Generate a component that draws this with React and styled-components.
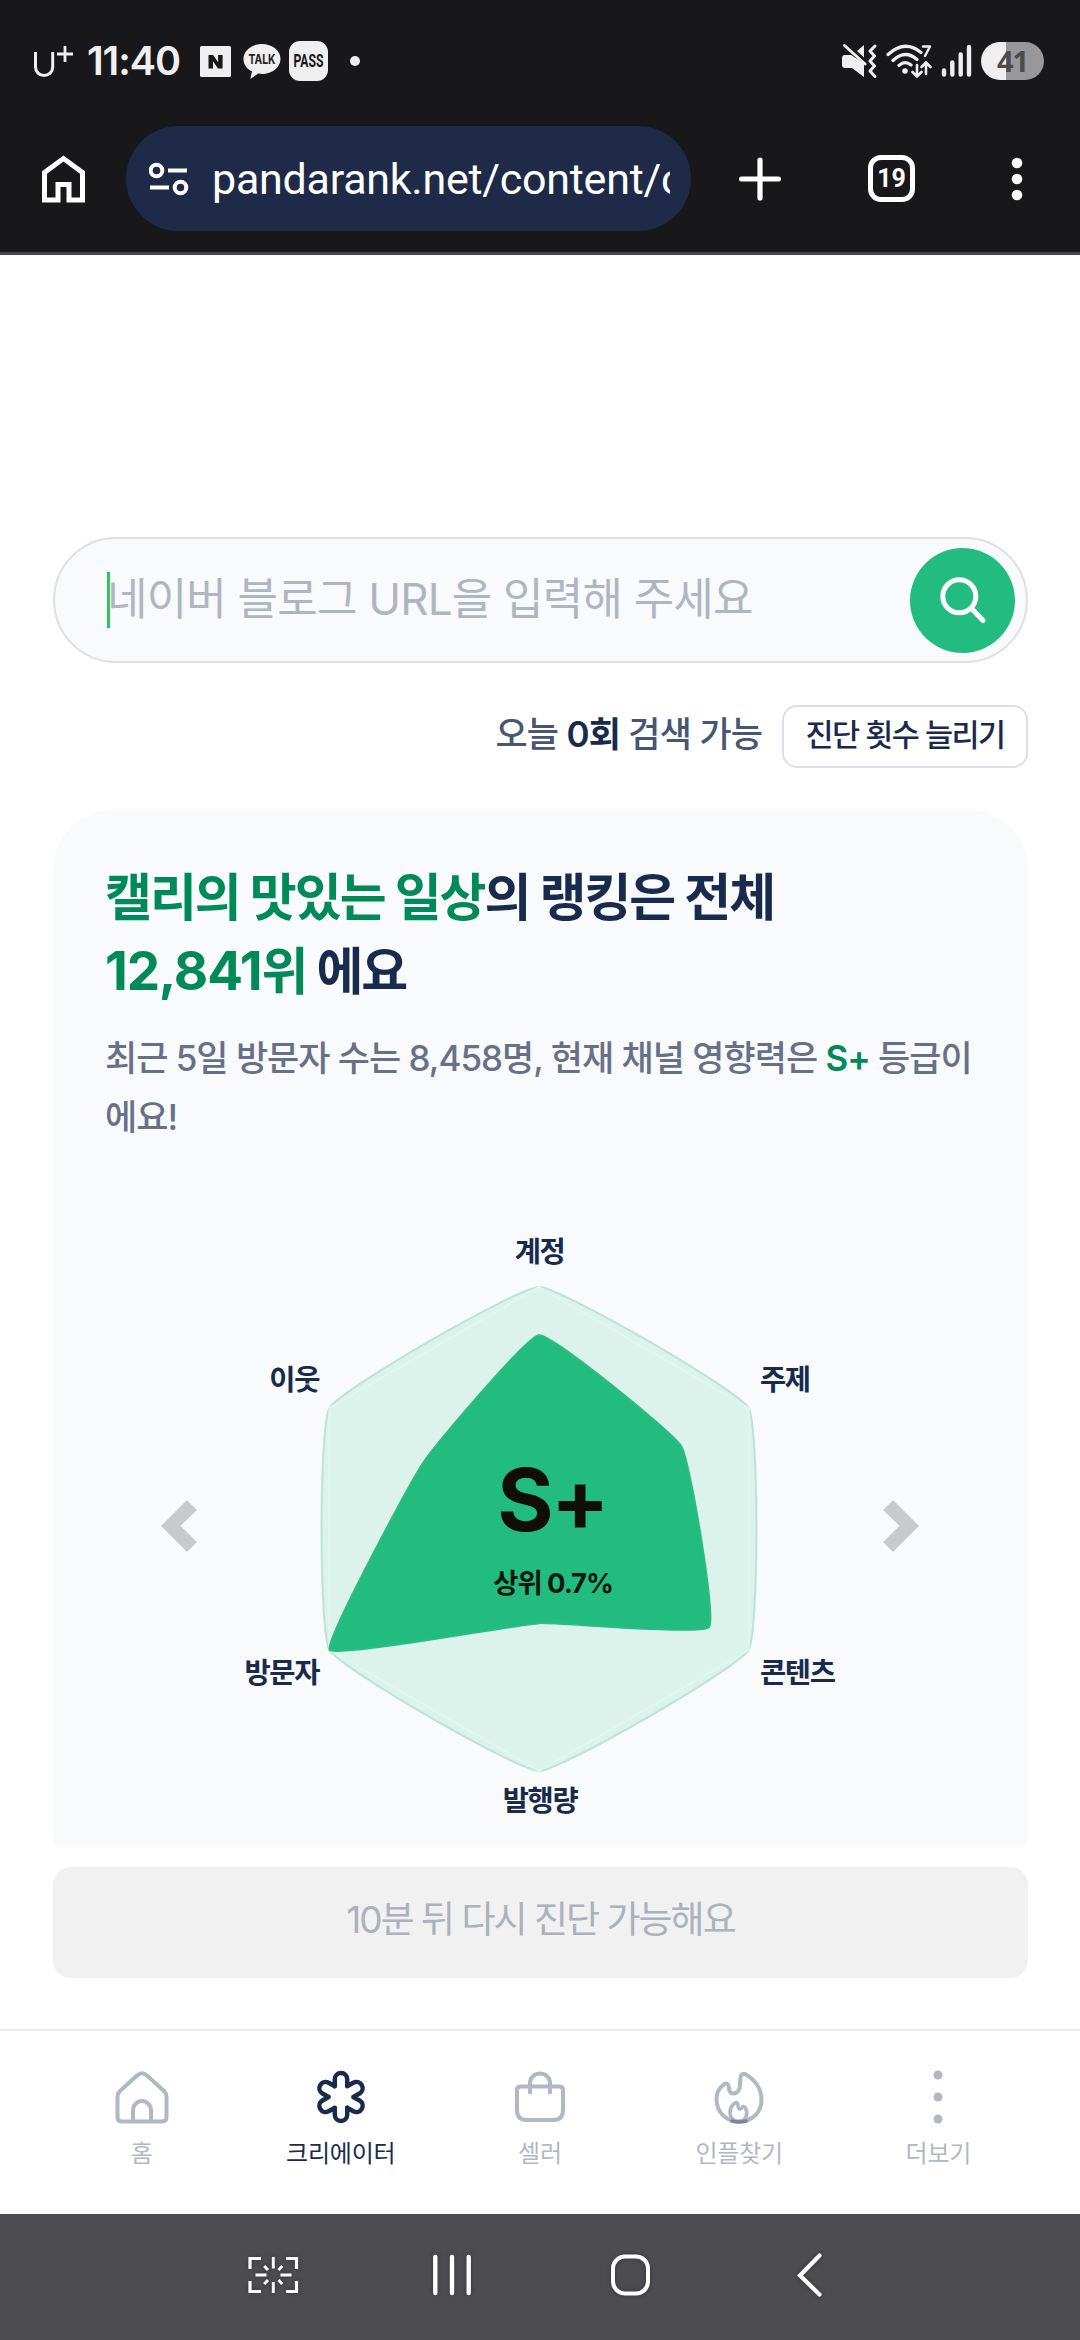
import React from 'react';
import styled, { createGlobalStyle } from 'styled-components';

const NAVY = '#182b4d';
const GREEN = '#008a59';
const MUTED = '#b1b8c5';

const GlobalStyle = createGlobalStyle`
  * { box-sizing: border-box; }
  html, body { margin: 0; padding: 0; background: #fff; }
  body {
    font-family: Inter, "Noto Sans CJK KR", sans-serif;
    color: ${NAVY};
    -webkit-font-smoothing: antialiased;
  }
  button, input { font-family: inherit; }
`;

const Screen = styled.div`
  width: 1080px;
  height: 2340px;
  display: flex;
  flex-direction: column;
  overflow: hidden;
  background: #fff;
`;

/* ---------- device status bar and browser toolbar ---------- */

const Chrome = styled.header`
  height: 255px;
  background: #18181a;
  border-bottom: 3px solid #46454c;
  display: flex;
  flex-direction: column;
`;

const StatusBar = styled.div`
  height: 126px;
  padding: 0 36px 4px 33px;
  display: flex;
  align-items: center;
  justify-content: space-between;
`;

const StatusGroup = styled.div`
  display: flex;
  align-items: center;
  gap: ${(p) => p.$gap || 0}px;
`;

const Clock = styled.span`
  width: 94px;
  margin: 0 19px 0 13px;
  font: 600 39.5px/48px Inter, sans-serif;
  letter-spacing: -1.1px;
  color: #efefef;
  white-space: nowrap;
`;

const TalkWrap = styled.div`
  width: 38px;
  height: 38px;
  margin: 0 8px 0 12px;
  svg { overflow: visible; }
`;

const PassBadge = styled.div`
  width: 39px;
  height: 40px;
  border-radius: 11px;
  background: #efefef;
  display: flex;
  align-items: center;
  justify-content: center;
  svg { overflow: visible; }
`;

const StatusDot = styled.div`
  width: 10px;
  height: 10px;
  margin-left: 22px;
  border-radius: 50%;
  background: #efefef;
`;

const Battery = styled.div`
  width: 63px;
  height: 38px;
  border-radius: 19px;
  background: linear-gradient(90deg, #efefef 0 25px, #98989a 25px);
  color: #4b4b4d;
  font: 700 29px/38px "Open Sans", sans-serif;
  letter-spacing: -1px;
  text-align: center;
`;

const Toolbar = styled.div`
  height: 105px;
  padding-left: 42px;
  display: flex;
  align-items: center;
`;

const UrlPill = styled.div`
  width: 565px;
  height: 105px;
  margin: 0 48px 0 41px;
  padding: 0 21px 0 23px;
  border-radius: 53px;
  background: #1e2a47;
  display: flex;
  align-items: center;
  gap: 23px;
`;

const UrlText = styled.span`
  flex: 1;
  overflow: hidden;
  white-space: nowrap;
  font: 400 43px/60px Roboto, sans-serif;
  letter-spacing: -0.25px;
  color: #fff;
`;

const TabCount = styled.div`
  width: 47px;
  height: 47px;
  margin: 0 95px 0 87px;
  border: 5px solid #fff;
  border-radius: 13px;
  color: #fff;
  font: 700 25px/37px Roboto, sans-serif;
  text-align: center;
`;

/* ---------- page ---------- */

const Page = styled.main`
  flex: 1;
  padding: 282px 52px 0 53px;
  display: flex;
  flex-direction: column;
`;

const SearchBox = styled.div`
  height: 126px;
  padding: 0 11px 0 52px;
  border: 2px solid #dfdfdf;
  border-radius: 63px;
  background: #f9fafc;
  display: flex;
  align-items: center;
`;

const Caret = styled.div`
  width: 3px;
  height: 56px;
  background: #33c35c;
`;

const Placeholder = styled.span`
  flex: 1;
  margin: 0 -20px 2px -3px;
  font-size: 44px;
  line-height: 60px;
  letter-spacing: -0.8px;
  color: #afb6c2;
  white-space: nowrap;
`;

const SearchButton = styled.button`
  width: 105px;
  height: 105px;
  padding: 0;
  border: 0;
  border-radius: 50%;
  background: #23bc80;
  display: flex;
  align-items: center;
  justify-content: center;
`;

const QuotaRow = styled.div`
  height: 63px;
  margin: 42px 0;
  display: flex;
  align-items: center;
  justify-content: flex-end;
  gap: 20px;
`;

const QuotaText = styled.span`
  padding-bottom: 5px;
  font-size: 35px;
  font-weight: 500;
  line-height: 48px;
  letter-spacing: -0.9px;
  color: #475671;
  white-space: nowrap;
  b { font-weight: 600; color: ${NAVY}; }
`;

const QuotaButton = styled.button`
  width: 246px;
  height: 63px;
  padding: 0 0 4px;
  border: 2px solid #dcdfe4;
  border-radius: 15px;
  background: #fff;
  color: ${NAVY};
  font-size: 30.5px;
  font-weight: 500;
  line-height: 55px;
  letter-spacing: -1.5px;
  white-space: nowrap;
`;

const CardWindow = styled.section`
  height: 1036px;
  overflow: hidden;
`;

const Card = styled.div`
  height: 1082px;
  padding: 51px 50px 0 52px;
  border-radius: 60px;
  background: #f9fafc;
`;

const Title = styled.h1`
  margin: 0;
  font-size: 51px;
  font-weight: 700;
  line-height: 74px;
  letter-spacing: -2px;
  white-space: nowrap;
  em { font-style: normal; color: ${GREEN}; }
`;

const RankNumber = styled.span`
  font-size: 53px;
  line-height: 0;
  letter-spacing: -1.2px;
`;

const Summary = styled.p`
  margin: 20px 0 0;
  font-size: 35px;
  font-weight: 500;
  line-height: 59px;
  letter-spacing: -1px;
  color: #667189;
  white-space: nowrap;
  em { font-style: normal; font-weight: 600; color: ${GREEN}; }
`;

const ChartArea = styled.div`
  margin: 69px -50px 0 -52px;
  height: 630px;
`;

const ChartSvg = styled.svg`
  display: block;
  width: 975px;
  height: 630px;
`;

const AxisLabel = styled.text`
  font-size: 28.5px;
  font-weight: 700;
  letter-spacing: -1.4px;
  fill: ${NAVY};
`;

const Grade = styled.text`
  font-size: 86px;
  font-weight: 700;
  letter-spacing: -2.5px;
  fill: #100e07;
`;

const GradeNote = styled.text`
  font-size: 27.5px;
  font-weight: 700;
  letter-spacing: -1.1px;
  fill: #08190f;
`;

const DiagnoseButton = styled.button`
  height: 111px;
  margin-top: 21px;
  padding: 0 0 5px;
  border: 0;
  border-radius: 18px;
  background: #f1f1f1;
  color: #abb2bd;
  font-size: 37px;
  line-height: 60px;
  letter-spacing: -2px;
`;

const TabBar = styled.nav`
  height: 185px;
  padding: 39px 42px 0;
  border-top: 2px solid #ebebef;
  background: #fff;
  display: grid;
  grid-template-columns: repeat(5, 1fr);
`;

const Tab = styled.a`
  display: flex;
  flex-direction: column;
  align-items: center;
  gap: 8px;
  font-size: 24px;
  line-height: 44px;
  letter-spacing: -0.2px;
  white-space: nowrap;
  color: ${(p) => (p.$active ? NAVY : MUTED)};
`;

const SystemNav = styled.footer`
  height: 126px;
  padding: 0 0 4px 246px;
  background: #4d4c51;
  display: grid;
  grid-template-columns: 186px 178px 187px auto;
  align-items: center;
  svg { filter: drop-shadow(0 0 2px rgba(0, 0, 0, 0.35)); }
`;

/* ---------- radar chart ---------- */

const CENTER = { x: 486, y: 313 };
const RADIUS = 242;
const SCORES = [0.802, 0.681, 0.812, 0.39, 1, 0.552];

const vertices = (scores) =>
  scores.map((s, i) => {
    const a = (Math.PI / 3) * i - Math.PI / 2;
    return [CENTER.x + Math.cos(a) * RADIUS * s, CENTER.y + Math.sin(a) * RADIUS * s];
  });

// Closed cardinal spline through the points, with control points weighted by edge length.
function splinePath(points, tension = 0.1) {
  const n = points.length;
  const at = (i) => points[(i + n) % n];
  const dist = (a, b) => Math.hypot(a[0] - b[0], a[1] - b[1]);
  const controls = points.map((p, i) => {
    const prev = at(i - 1);
    const next = at(i + 1);
    const d0 = dist(prev, p);
    const d1 = dist(p, next);
    const fa = (tension * d0) / (d0 + d1);
    const fb = (tension * d1) / (d0 + d1);
    const v = [next[0] - prev[0], next[1] - prev[1]];
    return {
      before: [p[0] - fa * v[0], p[1] - fa * v[1]],
      after: [p[0] + fb * v[0], p[1] + fb * v[1]],
    };
  });
  const parts = points.map((_, i) => {
    const j = (i + 1) % n;
    return `C${controls[i].after} ${controls[j].before} ${points[j]}`;
  });
  return `M${points[0]}${parts.join('')}Z`;
}

const FULL = vertices([1, 1, 1, 1, 1, 1]);

const AXES = [
  { text: '계정', x: 486.5, y: 46, anchor: 'middle' },
  { text: '주제', x: 707, y: 174, anchor: 'start' },
  { text: '콘텐츠', x: 707, y: 466.5, anchor: 'start' },
  { text: '발행량', x: 487, y: 595, anchor: 'middle' },
  { text: '방문자', x: 266, y: 466.5, anchor: 'end' },
  { text: '이웃', x: 266, y: 174, anchor: 'end' },
];

const RadarChart = () => (
  <ChartSvg viewBox="0 0 975 630">
    <path d={splinePath(FULL)} fill="#dbf3ea" stroke="#bce4d5" strokeWidth="2" />
    <polygon points={FULL.join(' ')} fill="none" stroke="#e1f6ef" strokeWidth="2" />
    <path d={splinePath(vertices(SCORES))} fill="#23bc80" stroke="#2fbb83" strokeWidth="1.5" />
    <polygon points="108,310 134,284 144,294 127.500,310 144,326 134,336" fill="#c8cbcd" />
    <polygon points="866,310 840,284 830,294 846.500,310 830,326 840,336" fill="#c8cbcd" />
    {AXES.map((a) => (
      <AxisLabel key={a.text} x={a.x} y={a.y} textAnchor={a.anchor}>{a.text}</AxisLabel>
    ))}
    <Grade x="499" y="315" textAnchor="middle">S+</Grade>
    <GradeNote x="500" y="377" textAnchor="middle">상위 0.7%</GradeNote>
  </ChartSvg>
);

/* ---------- icons ---------- */

const CarrierMark = () => (
  <svg width="41" height="36" viewBox="0 0 41 36" fill="none" stroke="#efefef">
    <path d="M2.500 9V24a8.600 8.600 0 0 0 17.200 0V9" strokeWidth="3" />
    <path d="M32 3V19M24 11H40" strokeWidth="2.800" />
  </svg>
);

const NaverMark = () => (
  <svg width="31" height="31" viewBox="0 0 31 31">
    <rect width="31" height="31" rx="1.500" fill="#efefef" />
    <path d="M8.500 9h4.600l5 7.200V9h4.500v13.500h-4.600l-5-7.200v7.200H8.500z" fill="#18181a" />
  </svg>
);

const TalkMark = () => (
  <TalkWrap>
    <svg width="38" height="38" viewBox="0 0 38 38">
      <path d="M19 2C8.800 2 .5 8.700 .5 17c0 5.400 3.400 10 8.500 12.600L7.300 37l8-5.400c1.200.2 2.500.3 3.700.3 10.200 0 18.500-6.700 18.500-15S29.200 2 19 2z" fill="#efefef" />
      <text x="19" y="22" textAnchor="middle" textLength="27" lengthAdjust="spacingAndGlyphs" fontFamily="Inter, sans-serif" fontWeight="700" fontSize="13.500" fill="#222">TALK</text>
    </svg>
  </TalkWrap>
);

const PassMark = () => (
  <PassBadge>
    <svg width="31" height="22" viewBox="0 0 31 22">
      <text x="0.500" y="17" textLength="30" lengthAdjust="spacingAndGlyphs" fontFamily="Roboto, sans-serif" fontWeight="700" fontSize="17.500" fill="#18181a">PASS</text>
    </svg>
  </PassBadge>
);

const MuteIcon = () => (
  <svg width="36" height="34" viewBox="0 0 36 34">
    <path d="M1 14q0-3 3-3h6L23 19.500V33L11 24H4q-3 0-3-3z" fill="#efefef" />
    <path d="M23 1v12.500L16 7z" fill="#efefef" />
    <path d="M3.500 1.500L24 20" stroke="#efefef" strokeWidth="3" strokeLinecap="round" />
    <path d="M34 2l-5 5 4.500 5-4.500 5 4.500 5-4.500 5 5 5.500" fill="none" stroke="#efefef" strokeWidth="3" strokeLinecap="round" strokeLinejoin="round" />
  </svg>
);

const WifiIcon = () => (
  <svg width="46" height="34" viewBox="0 0 46 34" fill="none" stroke="#efefef" strokeWidth="3.200" strokeLinecap="round" strokeLinejoin="round">
    <path d="M2 10.500Q19-5 35 8.500M7 16.500Q19 5 31 15.500M13 21.500Q19 16 25 21" />
    <circle cx="19" cy="27" r="2.800" fill="#efefef" stroke="none" />
    <path d="M37 2.500h7L39 12" strokeWidth="2.400" />
    <path d="M31 21v11M26.500 28l4.500 4.500L35.500 28M40 30V19M35.500 23L40 18.500 44.500 23" strokeWidth="2.600" />
  </svg>
);

const SignalIcon = () => (
  <svg width="31" height="34" viewBox="0 0 31 34" stroke="#efefef" strokeWidth="4.400" strokeLinecap="round">
    <path d="M3 26.500V30.500M11.300 18.500V30.500M19.700 10.500V30.500M28 3V30.500" />
  </svg>
);

const BrowserHomeIcon = () => (
  <svg width="43" height="48" viewBox="0 0 43 48" fill="none" stroke="#fff" strokeWidth="5">
    <path d="M2.500 17.500L21.500 3.500 40.500 17.500V45H27V29.500H16V45H2.500z" />
  </svg>
);

const TuneIcon = () => (
  <svg width="40" height="34" viewBox="0 0 40 34" fill="none" stroke="#fff" strokeWidth="4">
    <circle cx="7.500" cy="8.500" r="5.800" />
    <path d="M19 8.500H38M1 25.500H20" />
    <circle cx="31.500" cy="25.500" r="5.800" />
  </svg>
);

const PlusIcon = () => (
  <svg width="42" height="44" viewBox="0 0 42 44" stroke="#fff" strokeWidth="5.200" strokeLinecap="round">
    <path d="M21 3V41M2.600 22H39.400" />
  </svg>
);

const KebabIcon = ({ width, height, r, gap }) => (
  <svg width={width} height={height} fill="currentColor">
    {[-1, 0, 1].map((k) => (
      <circle key={k} cx={width / 2} cy={height / 2 + k * gap} r={r} />
    ))}
  </svg>
);

const ToolbarMenu = styled.span`
  display: flex;
  color: #fff;
`;

const SearchIcon = () => (
  <svg width="50" height="50" viewBox="0 0 50 50" fill="none" stroke="#fff" strokeWidth="5" strokeLinecap="round">
    <circle cx="21.300" cy="21.300" r="16.500" />
    <path d="M33.500 33.500L45 45.500" />
  </svg>
);

const TabIcon = ({ children }) => (
  <svg width="54" height="54" viewBox="0 0 54 54" fill="none" stroke="currentColor" strokeWidth="4" strokeLinecap="round" strokeLinejoin="round">
    {children}
  </svg>
);

const PETALS = Array.from({ length: 6 }, (_, i) => i * 60);

const FlowerIcon = () => {
  const rotate = ([x, y], deg) => {
    const a = (deg * Math.PI) / 180;
    return [27 + x * Math.cos(a) - y * Math.sin(a), 27 + x * Math.sin(a) + y * Math.cos(a)];
  };
  const d = PETALS.map((deg, i) => {
    const a = rotate([-6.2, -10.7], deg);
    const b = rotate([-6.2, -17.8], deg);
    const c = rotate([6.2, -17.8], deg);
    const e = rotate([6.2, -10.7], deg);
    return `${i ? 'L' : 'M'}${a}L${b}A6.200 6.200 0 0 1 ${c}L${e}`;
  }).join('');
  return (
    <TabIcon>
      <path d={`${d}Z`} strokeWidth="4.500" />
    </TabIcon>
  );
};

const HomeTabIcon = () => (
  <TabIcon>
    <path d="M22 5.500Q27 1 32 5.500L49 21Q51.500 23.500 51.500 27V47Q51.500 51.500 47 51.500H7Q2.500 51.500 2.500 47V27Q2.500 23.500 5 21z" />
    <path d="M18 51V40.500a9 9.500 0 0 1 18 0V51" />
  </TabIcon>
);

const BagTabIcon = () => (
  <TabIcon>
    <path d="M7.500 16.500H46.500Q50 16.500 50 20V40Q50 50 40.500 50H13.500Q4 50 4 40V20Q4 16.500 7.500 16.500z" />
    <path d="M17 22.500V13a10 9.500 0 0 1 20 0v9.500" />
  </TabIcon>
);

const FlameTabIcon = () => (
  <TabIcon>
    <path d="M28.500 7C29 4 31.500 3 34 4.500 43 10 49.500 19 49.500 29.500 49.500 43 40 51.500 27 51.500S4.500 42 4.500 29C4.500 23 7.500 17.500 12 14.300 14.500 12.600 17 14 17 17.500 17 21 18.500 23.500 21.500 23.500 25.500 23.500 28 19.500 28 14.500z" />
    <path d="M26.500 51.500C21 51.500 18 47 18 42.500 18 38.500 20 35 23 33 25 32 26 33.500 26 35.500 26 37.500 27 39 28 39 29 39 30 38 30.500 37 31 36.200 32.500 36.500 33.500 38 36 43 35 51.500 26.500 51.500z" strokeWidth="3.600" />
    <path d="M20 51Q27 53 34 51" stroke="#7b8799" strokeWidth="3.600" />
  </TabIcon>
);

const CaptureIcon = () => (
  <svg width="54" height="42" viewBox="0 0 54 42" fill="none" stroke="#fff" strokeWidth="3.200">
    <path d="M4 15V4.500H15M40 4.500H50.500V15M4 27V37.500H15M40 37.500H50.500V27" />
    <path d="M27.300 3V14.500M27.300 28V39M9.500 21H20.500M34.500 21H45.500M18.200 12L22 16M36.300 12L32.500 16M18.200 30L22 26M36.300 30L32.500 26" strokeWidth="2.900" />
  </svg>
);

const RecentsIcon = () => (
  <svg width="40" height="42" viewBox="0 0 40 42" stroke="#fff" strokeWidth="4.400" strokeLinecap="round">
    <path d="M3.300 3V39M20 3V39M36.700 3V39" />
  </svg>
);

const SystemHomeIcon = () => (
  <svg width="42" height="44" viewBox="0 0 42 44" fill="none" stroke="#fff" strokeWidth="4">
    <rect x="3" y="3.500" width="35" height="37" rx="12" />
  </svg>
);

const BackIcon = () => (
  <svg width="26" height="44" viewBox="0 0 26 44" fill="none" stroke="#fff" strokeWidth="4.200" strokeLinecap="round">
    <path d="M22.500 2.500L3 22.500 22.500 41.500" />
  </svg>
);

const TABS = [
  { label: '홈', icon: <HomeTabIcon /> },
  { label: '크리에이터', icon: <FlowerIcon />, active: true },
  { label: '셀러', icon: <BagTabIcon /> },
  { label: '인플찾기', icon: <FlameTabIcon /> },
  { label: '더보기', icon: <KebabIcon width={54} height={54} r={4.5} gap={22} /> },
];

export default function App() {
  return (
    <>
      <GlobalStyle />
      <Screen>
        <Chrome>
          <StatusBar>
            <StatusGroup>
              <CarrierMark />
              <Clock>11:40</Clock>
              <NaverMark />
              <TalkMark />
              <PassMark />
              <StatusDot />
            </StatusGroup>
            <StatusGroup $gap={9}>
              <MuteIcon />
              <WifiIcon />
              <SignalIcon />
              <Battery>41</Battery>
            </StatusGroup>
          </StatusBar>
          <Toolbar>
            <BrowserHomeIcon />
            <UrlPill>
              <TuneIcon />
              <UrlText>pandarank.net/content/c</UrlText>
            </UrlPill>
            <PlusIcon />
            <TabCount>19</TabCount>
            <ToolbarMenu>
              <KebabIcon width={14} height={44} r={5.3} gap={16} />
            </ToolbarMenu>
          </Toolbar>
        </Chrome>

        <Page>
          <SearchBox>
            <Caret />
            <Placeholder>네이버 블로그 URL을 입력해 주세요</Placeholder>
            <SearchButton aria-label="검색">
              <SearchIcon />
            </SearchButton>
          </SearchBox>

          <QuotaRow>
            <QuotaText>오늘 <b>0회</b> 검색 가능</QuotaText>
            <QuotaButton>진단 횟수 늘리기</QuotaButton>
          </QuotaRow>

          <CardWindow>
            <Card>
              <Title>
                <em>캘리의 맛있는 일상</em>의 랭킹은 전체<br />
                <em><RankNumber>12,841</RankNumber>위</em> 에요
              </Title>
              <Summary>
                최근 5일 방문자 수는 8,458명, 현재 채널 영향력은 <em>S+</em> 등급이<br />
                에요!
              </Summary>
              <ChartArea>
                <RadarChart />
              </ChartArea>
            </Card>
          </CardWindow>

          <DiagnoseButton>10분 뒤 다시 진단 가능해요</DiagnoseButton>
        </Page>

        <TabBar>
          {TABS.map((t) => (
            <Tab key={t.label} $active={t.active}>
              {t.icon}
              {t.label}
            </Tab>
          ))}
        </TabBar>

        <SystemNav>
          <CaptureIcon />
          <RecentsIcon />
          <SystemHomeIcon />
          <BackIcon />
        </SystemNav>
      </Screen>
    </>
  );
}
